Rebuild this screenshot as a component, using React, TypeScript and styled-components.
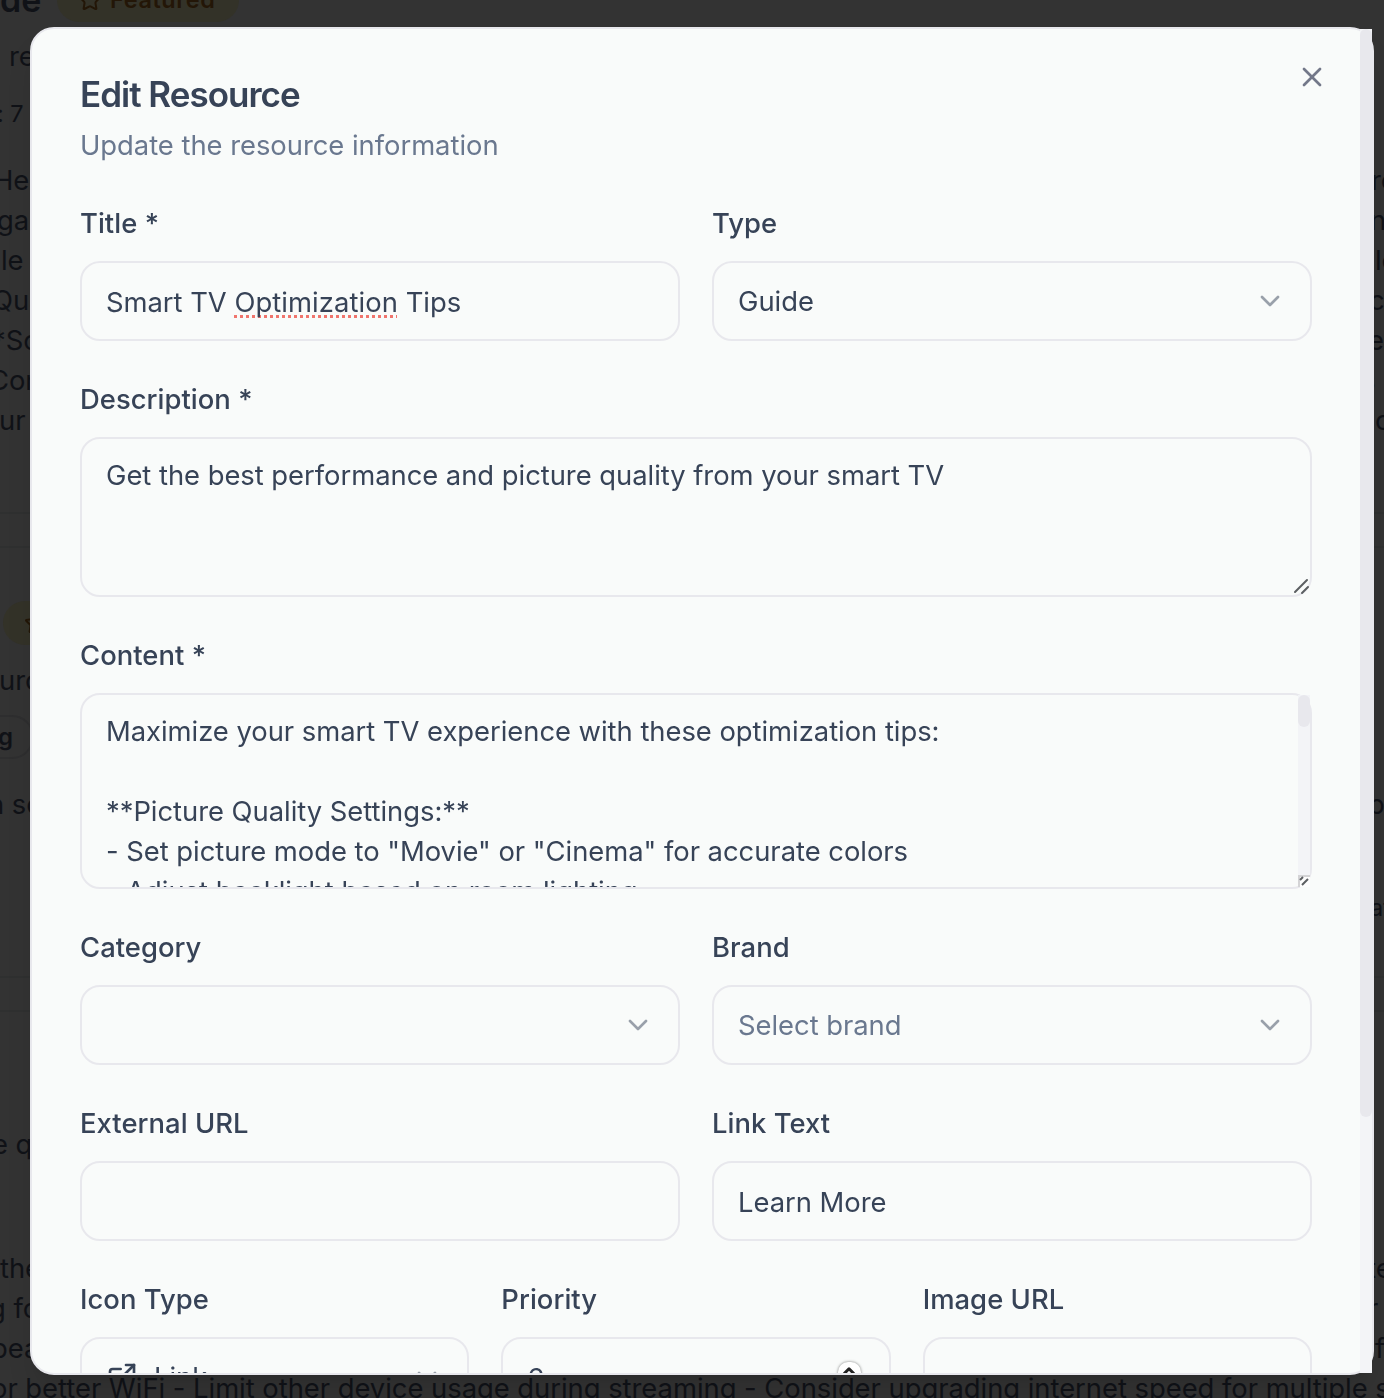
import React from "react";
import styled, { createGlobalStyle, css } from "styled-components";
import { ChevronDown, ChevronUp, ExternalLink, Star, X } from "lucide-react";

const Global = createGlobalStyle`
  * { box-sizing: border-box; }
  html, body { margin: 0; height: 100%; overflow: hidden; background: #333333; }
  body {
    font-family: Inter, "Liberation Sans", sans-serif;
    font-size: 27.4px;
    line-height: 40px;
    letter-spacing: -0.03px;
    -webkit-font-smoothing: antialiased;
  }
`;

const line = "#e8e8ed";
const ink = "#374357";

/* ---------- dimmed page behind the dialog ---------- */

const Page = styled.div`
  height: 1398px;
  overflow: hidden;
  display: flex;
  flex-direction: column;
  color: #101217;
`;

const Row = styled.div<{ $h?: number; $small?: boolean; $edge?: "top" | "bottom" }>`
  flex: none;
  display: flex;
  align-items: center;
  height: ${(p) => p.$h ?? 40}px;
  white-space: nowrap;
  font-size: ${(p) => (p.$small ? 23.5 : 27.4)}px;
  ${(p) => p.$edge === "top" && css`border-top: 2px solid #2f3030;`}
  ${(p) => p.$edge === "bottom" && css`border-bottom: 2px solid #2f3030;`}
`;

const TopRow = styled(Row)`
  height: 36px;
  padding-bottom: 36px;
`;

const Start = styled.span<{ $x?: number }>`
  flex: none;
  width: ${(p) => 1374 - (p.$x ?? 0)}px;
  margin-left: ${(p) => p.$x ?? 0}px;
`;

const End = styled.span<{ $x?: number }>`
  flex: none;
  margin-left: ${(p) => p.$x ?? 0}px;
`;

const CardTitle = styled.span`
  flex: none;
  width: 57px;
  font-size: 34px;
  font-weight: 600;
  letter-spacing: 0;
`;

const Featured = styled.span<{ $x?: number }>`
  flex: none;
  display: flex;
  align-items: center;
  gap: 8px;
  width: 182px;
  height: 44px;
  padding: 0 20px 0 21px;
  margin-left: ${(p) => p.$x ?? 0}px;
  border-radius: 22px;
  background: #333228;
  color: #231607;
  font-size: 23.5px;
  font-weight: 600;
  letter-spacing: 0.6px;
`;

const Tag = styled.span`
  flex: none;
  width: 110px;
  height: 44px;
  margin-left: -76px;
  padding-right: 19px;
  display: flex;
  align-items: center;
  justify-content: flex-end;
  border: 2px solid #2e2e2f;
  border-radius: 22px;
  font-size: 24px;
  font-weight: 600;
`;

/* ---------- dialog ---------- */

const Dialog = styled.div`
  position: fixed;
  left: 30px;
  top: 27px;
  width: 1344px;
  height: 1348px;
  display: flex;
  border: 2px solid ${line};
  border-radius: 24px;
  background: #f9fbfa;
  color: ${ink};
  box-shadow: 0 20px 30px -6px rgba(0, 0, 0, 0.12), 0 8px 12px -8px rgba(0, 0, 0, 0.12);
`;

const Body = styled.div`
  flex: 1;
  min-width: 0;
  overflow: hidden;
  padding: 47px 48px 0;
  border-radius: 22px 0 0 22px;
`;

const Track = styled.div`
  flex: none;
  width: 12px;
  background: #f3f4f7;
`;

const Thumb = styled.div<{ $h: number }>`
  height: ${(p) => p.$h}px;
  border-radius: 6px;
  background: ${line};
`;

const Close = styled.button`
  position: absolute;
  top: 32px;
  right: 44px;
  width: 32px;
  height: 32px;
  padding: 0;
  border: 0;
  background: none;
  color: #737889;
  svg { display: block; }
`;

const Heading = styled.h2`
  margin: 0 0 13px;
  font-size: 35px;
  line-height: 36px;
  font-weight: 600;
  letter-spacing: -1px;
`;

const Lead = styled.p`
  margin: 0 0 44px;
  color: #6a788f;
`;

const Form = styled.form`
  display: flex;
  flex-direction: column;
  gap: 44px;
`;

const Columns = styled.div<{ $n: number }>`
  display: grid;
  grid-template-columns: repeat(${(p) => p.$n}, 1fr);
  gap: 32px;
`;

const Label = styled.label`
  display: block;
  margin-bottom: 24px;
  line-height: 28px;
  font-weight: 500;
  letter-spacing: 0.04px;
`;

const Box = styled.div<{ $muted?: boolean; $input?: boolean }>`
  display: flex;
  align-items: center;
  gap: 16px;
  height: 80px;
  padding: ${(p) => (p.$input ? "2px" : "0")} 24px 0;
  border: 2px solid ${line};
  border-radius: 20px;
  color: ${(p) => (p.$muted ? "#6a788f" : ink)};
`;

const Value = styled.span`
  flex: 1;
  white-space: pre;
`;

const Caret = styled(ChevronDown)`
  flex: none;
  color: #99a0aa;
`;

const Misspelt = styled.span`
  letter-spacing: 0.08px;
  text-decoration: underline dotted #f0756d 3px;
  text-underline-offset: 3px;
  text-decoration-skip-ink: none;
`;

const Area = styled.div<{ $h: number }>`
  position: relative;
  display: flex;
  height: ${(p) => p.$h}px;
  border: 2px solid ${line};
  border-radius: 20px;
`;

const AreaText = styled.div`
  flex: 1;
  overflow: hidden;
  padding: 16px 24px 0;
  white-space: pre-wrap;
`;

const AreaTrack = styled(Track)`
  height: 180px;
`;

const Grip = styled.svg`
  position: absolute;
  right: 0;
  bottom: 0;
`;

const Stepper = styled.span`
  display: flex;
  flex-direction: column;
  align-items: center;
  width: 23px;
  height: 32px;
  margin-right: 4px;
  border-radius: 10px;
  background: #ffffff;
  color: #222222;
  box-shadow: 0 0 3px rgba(0, 0, 0, 0.5);
`;

function Field({ label, children }: { label: string; children: React.ReactNode }) {
  return (
    <div>
      <Label>{label}</Label>
      {children}
    </div>
  );
}

function Select({ value, muted, icon }: { value?: string; muted?: boolean; icon?: React.ReactNode }) {
  return (
    <Box $muted={muted}>
      {icon}
      <Value>{value}</Value>
      <Caret size={32} />
    </Box>
  );
}

const content = `Maximize your smart TV experience with these optimization tips:

**Picture Quality Settings:**
- Set picture mode to "Movie" or "Cinema" for accurate colors
- Adjust backlight based on room lighting`;

const guideLines: [string, number, string, number][] = [
  ["He", -7, "re", -3],
  ["ga", -3, "n", -4],
  ["le", 1, "le", 1],
  ["Qua", -8, "ct", -5],
  ["*So", -8, "er", -6],
  ["Con", -11, "s", -13],
  ["ur", -1, "o", 1],
];

const wifiLines: [string, number, string, number][] = [
  ["the", 0, "te", -7],
  ["g fo", -11, "r", -6],
  ["bea", -9, "f", 1],
];

function TextRows({ rows }: { rows: [string, number, string, number][] }) {
  return (
    <>
      {rows.map(([a, ax, b, bx]) => (
        <Row key={a}>
          <Start $x={ax}>{a}</Start>
          <End $x={bx}>{b}</End>
        </Row>
      ))}
    </>
  );
}

export default function App() {
  return (
    <>
      <Global />
      <Page>
        <TopRow>
          <CardTitle>de</CardTitle>
          <Featured>
            <Star size={24} />
            Featured
          </Featured>
        </TopRow>
        <Row>
          <Start $x={9}>re</Start>
        </Row>
        <Row $h={75} $small>
          <Start $x={-3}>: 7</Start>
        </Row>
        <Row $h={9} />
        <TextRows rows={guideLines} />
        <Row $h={74} $edge="bottom" />
        <Row $h={32} />
        <Row $h={54} $edge="top" />
        <Row $h={46}>
          <Featured $x={3}>
            <Star size={24} />
            Featured
          </Featured>
        </Row>
        <Row $h={14} />
        <Row>
          <Start $x={-1}>urc</Start>
        </Row>
        <Row $h={15} />
        <Row $h={44}>
          <Tag>g</Tag>
        </Row>
        <Row $h={25} />
        <Row>
          <Start $x={-12}>n sc</Start>
          <End $x={-6}>pa</End>
        </Row>
        <Row $h={64} />
        <Row $small>
          <Start />
          <End $x={-4}>at</End>
        </Row>
        <Row $h={50} $edge="bottom" />
        <Row $h={32} />
        <Row $h={114} $edge="top" />
        <Row>
          <Start $x={-8}>e q</Start>
        </Row>
        <Row $h={84} />
        <TextRows rows={wifiLines} />
        <Row>
          <Start $x={-9}>
            or better WiFi - Limit other device usage during streaming - Consider upgrading internet speed for multiple
            streams
          </Start>
        </Row>
      </Page>

      <Dialog role="dialog">
        <Body>
          <Heading>Edit Resource</Heading>
          <Lead>Update the resource information</Lead>
          <Form>
            <Columns $n={2}>
              <Field label="Title *">
                <Box $input>
                  <Value>
                    Smart TV <Misspelt>Optimization</Misspelt> Tips
                  </Value>
                </Box>
              </Field>
              <Field label="Type">
                <Select value="Guide" />
              </Field>
            </Columns>
            <Field label="Description *">
              <Area $h={160}>
                <AreaText>Get the best performance and picture quality from your smart TV</AreaText>
                <Grip width="18" height="18" stroke="#5c5f62" strokeWidth="2" strokeLinecap="round">
                  <path d="M3 15 15 3M10 16 16 10" />
                </Grip>
              </Area>
            </Field>
            <Field label="Content *">
              <Area $h={196}>
                <AreaText>{content}</AreaText>
                <AreaTrack>
                  <Thumb $h={32} />
                </AreaTrack>
                <Grip width="12" height="12" stroke="#5c5f62" strokeWidth="2" fill="none">
                  <rect width="12" height="12" fill="#fdfdfd" stroke="none" />
                  <path d="M0 1H12M1 0V12" stroke="#d4d4d6" />
                  <path d="M4 10 10 4M2 5 5 2" />
                </Grip>
              </Area>
            </Field>
            <Columns $n={2}>
              <Field label="Category">
                <Select />
              </Field>
              <Field label="Brand">
                <Select value="Select brand" muted />
              </Field>
            </Columns>
            <Columns $n={2}>
              <Field label="External URL">
                <Box $input />
              </Field>
              <Field label="Link Text">
                <Box $input>
                  <Value>Learn More</Value>
                </Box>
              </Field>
            </Columns>
            <Columns $n={3}>
              <Field label="Icon Type">
                <Select value="Link" icon={<ExternalLink size={32} />} />
              </Field>
              <Field label="Priority">
                <Box $input>
                  <Value>6</Value>
                  <Stepper>
                    <ChevronUp size={18} strokeWidth={4} />
                  </Stepper>
                </Box>
              </Field>
              <Field label="Image URL">
                <Box $input />
              </Field>
            </Columns>
          </Form>
        </Body>
        <Track>
          <Thumb $h={1088} />
        </Track>
        <Close type="button" aria-label="Close">
          <X size={32} />
        </Close>
      </Dialog>
    </>
  );
}
